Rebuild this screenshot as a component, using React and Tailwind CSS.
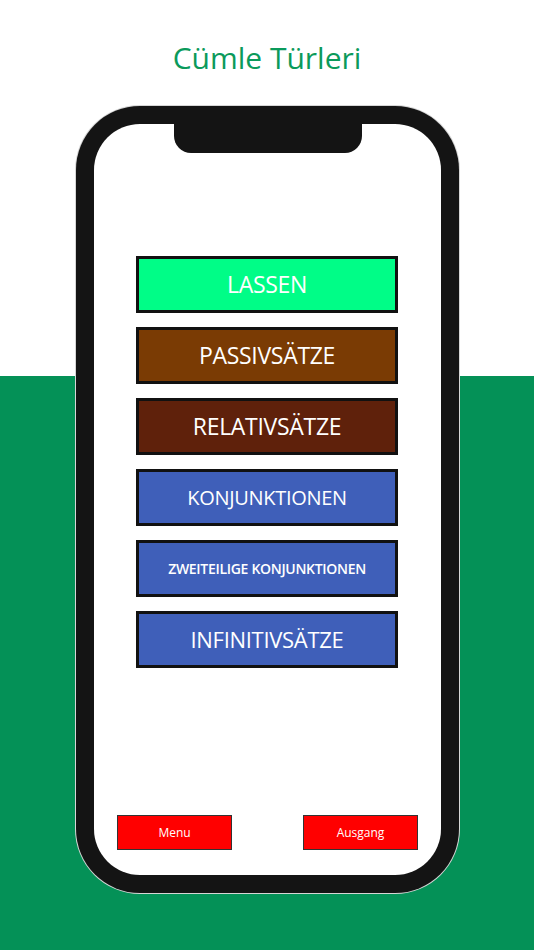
import React from "react";

const topics = [
  { label: "LASSEN", bg: "bg-[#00fd87]", text: "text-[23px]" },
  { label: "PASSIVSÄTZE", bg: "bg-[#7a3b04]", text: "text-[23px]" },
  { label: "RELATIVSÄTZE", bg: "bg-[#5f210b]", text: "text-[23px]" },
  { label: "KONJUNKTIONEN", bg: "bg-[#3f5fb9]", text: "text-[20px]" },
  { label: "ZWEITEILIGE KONJUNKTIONEN", bg: "bg-[#3f5fb9]", text: "text-[14px] font-semibold" },
  { label: "INFINITIVSÄTZE", bg: "bg-[#3f5fb9]", text: "text-[22px]" },
];

export default function App() {
  return (
    <div
      className="w-[534px] h-[950px] flex flex-col items-center bg-[linear-gradient(to_bottom,#ffffff_376px,#049157_376px)]"
      style={{ fontFamily: '"Open Sans", "Noto Sans", sans-serif' }}
    >
      {/* Title */}
      <h1 className="mt-[36px] h-[44px] text-[30px] leading-[44px] text-[#0b9a5b]">
        Cümle Türleri
      </h1>

      {/* Phone */}
      <div className="mt-[26px] ml-[1px] w-[383px] h-[787px] rounded-[64px] bg-[#141414] p-[18px] ring-1 ring-[#d6d6d6]">
        <div className="relative h-full w-full rounded-[46px] bg-white flex flex-col overflow-hidden">
          {/* Notch */}
          <div className="self-center ml-[1px] w-[188px] h-[29px] bg-[#141414] rounded-b-[17px] shrink-0" />

          {/* Topic buttons */}
          <div className="mt-[103px] flex flex-col gap-[14px] pl-[42px]">
            {topics.map((t) => (
              <button
                key={t.label}
                className={`w-[262px] h-[57px] border-[3px] border-[#111] ${t.bg} flex items-center justify-center text-white ${t.text} tracking-[-0.3px]`}
              >
                {t.label}
              </button>
            ))}
          </div>

          {/* Bottom buttons */}
          <div className="mt-auto mb-[25px] flex justify-between px-[23px]">
            <button className="w-[115px] h-[35px] bg-[#ff0000] border border-[#333] text-white text-[12px]">
              Menu
            </button>
            <button className="w-[115px] h-[35px] bg-[#ff0000] border border-[#333] text-white text-[12px]">
              Ausgang
            </button>
          </div>
        </div>
      </div>
    </div>
  );
}
